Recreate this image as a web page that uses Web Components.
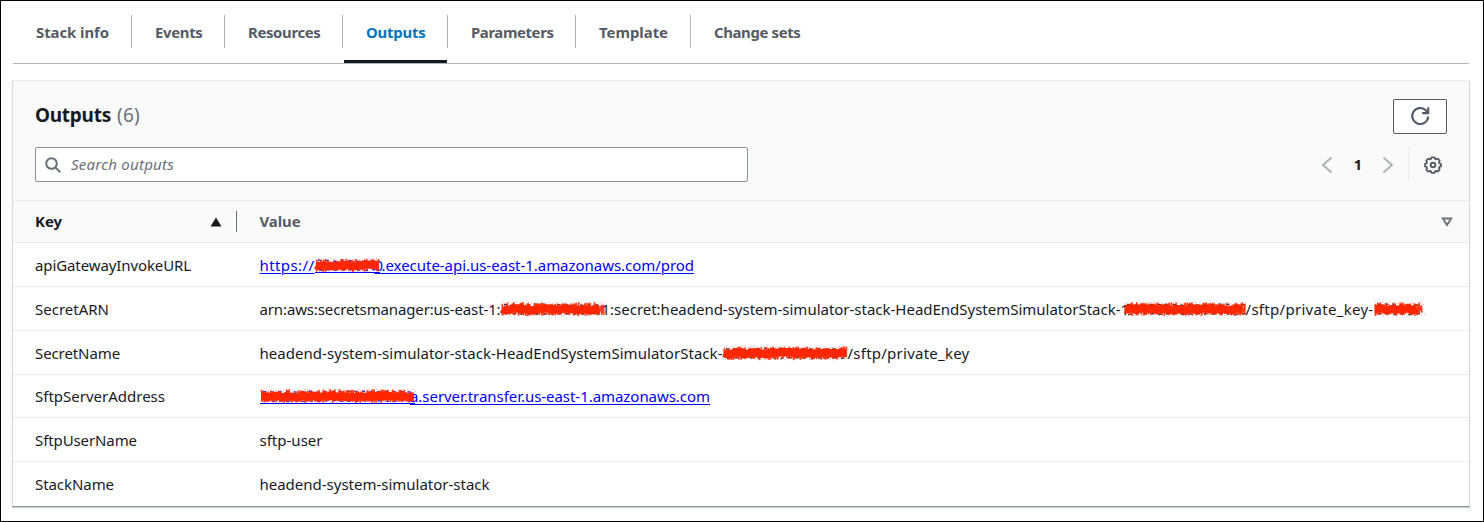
<!DOCTYPE html>
<html lang="en">
<head>
<meta charset="utf-8">
<title>Stack outputs</title>
<style>
html,body{margin:0;height:100%}
body{font:15px/22px "Noto Sans","Open Sans",sans-serif;color:#16191f;background:#fff;overflow:hidden}
</style>
</head>
<body>
<stack-page></stack-page>
<script>
const define = (name, html, setup) => {
  const t = document.createElement('template');
  t.innerHTML = html;
  customElements.define(name, class extends HTMLElement {
    connectedCallback() {
      if (this.shadowRoot) return;
      this.attachShadow({mode: 'open'}).append(t.content.cloneNode(true));
      if (setup) setup(this, this.shadowRoot);
    }
  });
};

// Text tracked to occupy the width given in its "w" attribute.
define('fit-text', `<style>:host{display:inline-block;white-space:pre;flex:none}span{display:inline-block;text-decoration:var(--line,none);text-decoration-thickness:1px;text-underline-offset:2px}</style><span><slot></slot></span>`, (el, root) => {
  const s = root.querySelector('span');
  const w = +el.getAttribute('w');
  const n = el.textContent.length;
  s.style.letterSpacing = (w - s.getBoundingClientRect().width) / n + 'px';
  el.style.width = w + 'px';
});

// Red marker scribble laid over a confidential part of a value.
define('marker-redaction', `<style>:host{display:block;flex:none;height:16px;position:relative;z-index:1}svg{display:block;overflow:visible}</style><svg height="16"></svg>`, (el, root) => {
  const w = +el.getAttribute('w'), link = el.hasAttribute('link');
  let seed = w * 7919 + 13;
  const r = () => (seed = (seed * 16807) % 2147483647) / 2147483647;
  const f = v => v.toFixed(1);
  let out = '';
  if (link) out += `<path d="M0 15.500H${w}" stroke="#00f"/>`;
  let marks = '';
  for (let x = 3; x < w - 4; x += 7.6) marks += `M${f(x)} ${f(3 + r())}l3.500 .5M${f(x + 1)} ${f(12.8 + r())}l3.500 -.6`;
  out += `<path d="${marks}" stroke="${link ? '#4030c0' : '#40303a'}" stroke-width="1.5" fill="none"/>`;
  let d = `M1 4`;
  for (let x = 1; x < w - 1; x += 2.3) d += `L${f(x + r())} ${f(1.2 + r() * 4)}L${f(x + 1 - r())} ${f(11.4 + r() * 3.6)}`;
  out += `<path d="${d}" fill="none" stroke="#ff2600" stroke-opacity=".9" stroke-width="1.600"/>`;
  let core = `M1 8`;
  for (let x = 3; x < w - 1; x += 5) core += `L${f(x)} ${f(7 + r() * 2.6)}`;
  out += `<path d="${core}" fill="none" stroke="#ff2600" stroke-width="8"/>`;
  let dots = '';
  for (let x = 1; x < w; x += 2.4) dots += `M${f(x)} ${f(1 + r() * 2.400)}h1M${f(x + r())} ${f(12.8 + r() * 2)}h1`;
  out += `<path d="${dots}" stroke="#ff6a50" stroke-opacity=".7" stroke-width="1"/>`;
  const svg = root.querySelector('svg');
  svg.setAttribute('width', w);
  svg.innerHTML = out;
  el.style.width = w + 'px';
});

define('tab-item', `<style>
:host{display:flex;box-sizing:border-box;height:48px;padding:6px 0 0 23px;position:relative;font-weight:700;color:#545b64;line-height:22px;font-size:14.900px}
:host([first]){padding-left:22px}
:host([active]){color:#0073bb}
:host(:not([last]))::after{content:"";position:absolute;right:0;top:0;width:1px;height:33px;background:#aab7b8}
:host([active])::before{content:"";position:absolute;left:1px;right:1px;bottom:0;height:3px;background:#16191f}
</style><slot></slot>`, el => { el.style.width = el.getAttribute('w') + 'px'; });

define('tab-bar', `<style>
:host{display:flex;height:48px;border-bottom:1px solid #aab7b8;box-sizing:content-box;padding-left:1px;margin-right:1px}
</style>
<tab-item w="118" first><fit-text w="73">Stack info</fit-text></tab-item>
<tab-item w="93"><fit-text w="47.500">Events</fit-text></tab-item>
<tab-item w="118"><fit-text w="72.500">Resources</fit-text></tab-item>
<tab-item w="105" active><fit-text w="59.500">Outputs</fit-text></tab-item>
<tab-item w="128"><fit-text w="82.500">Parameters</fit-text></tab-item>
<tab-item w="115"><fit-text w="69">Template</fit-text></tab-item>
<tab-item w="120" last><fit-text w="86.500">Change sets</fit-text></tab-item>`);

define('refresh-button', `<style>
:host{display:block;width:54px;height:35px}
button{display:grid;place-items:center;width:54px;height:35px;border:1px solid #545b64;border-radius:2px;background:#fff;padding:0 0 1px;box-sizing:border-box}
</style><button aria-label="Refresh"><svg width="20" height="20" viewBox="0 0 20 20" fill="none" stroke="#545b64" stroke-width="2.100"><path d="M18.2 10.500a8 8 0 1 1-2.500-6.300L18 6.400"/><path d="M18.200 1.300v5.800h-6"/></svg></button>`);

define('search-field', `<style>
:host{display:flex;align-items:center;box-sizing:border-box;width:713px;height:35px;border:1px solid #879596;border-radius:2px;background:#fff;padding-left:9px;color:#687078;font-style:italic}
svg{margin-right:10px}
fit-text{margin-top:-2px}
</style><svg width="16" height="16" viewBox="0 0 16 16" fill="none" stroke="#687078" stroke-width="2"><circle cx="6.500" cy="6.500" r="5.300"/><path d="M10.400 10.400 15.200 15.200"/></svg><fit-text w="103">Search outputs</fit-text>`);

define('page-controls', `<style>
:host{display:flex;align-items:center;height:35px}
.num{width:13px;text-align:center;font-weight:700;font-size:14.500px;margin:-1px 17.500px 0 18.500px}
.sep{width:1px;height:35px;background:#eaeded;margin:0 15px 0 14px}
</style>
<svg width="12" height="18" viewBox="0 0 12 18" fill="none" stroke="#aab7b8" stroke-width="2"><path d="M10.500 1.500 2 9l8.500 7.500"/></svg>
<span class="num">1</span>
<svg width="12" height="18" viewBox="0 0 12 18" fill="none" stroke="#aab7b8" stroke-width="2"><path d="M1.500 1.500 10 9l-8.500 7.500"/></svg>
<span class="sep"></span>
<svg width="18" height="18" viewBox="0 0 18 18" fill="none" stroke="#545b64"><path stroke-width="1.800" stroke-linejoin="round" d="M7.500 1.300h3l.5 1.500 1.200.5 1.500-.7 2 2-.7 1.500.5 1.200 1.500.5v2.600l-1.500.5-.5 1.200.7 1.500-2 2-1.500-.7-1.200.5-.5 1.500h-3L7 15.400l-1.200-.5-1.500.7-2-2 .7-1.500-.5-1.200L1 10.400V7.800l1.500-.5L3 6.100l-.7-1.500 2-2 1.500.7L7 2.800z"/><circle cx="9" cy="9" r="2.300" stroke-width="1.900"/></svg>`);

define('table-row', `<style>
:host{display:grid;grid-template-columns:224.500px 1fr;align-items:center;box-sizing:border-box;padding-left:22px;border-bottom:1px solid #eaeded;height:44px;background:#fff}
:host([short]){height:43px}
:host([final]){border-bottom:0}
.v{display:flex;align-items:center;height:22px}
</style><slot name="key"></slot><div class="v"><slot></slot></div>`);

define('value-link', `<style>:host{display:block;color:#00f;--line:underline}a{color:inherit;display:flex;align-items:center;text-decoration:none}</style><a href="#"><slot></slot></a>`);

define('outputs-panel', `<style>
:host{display:block;box-sizing:border-box;height:427px;border:1px solid #d5dbdb;border-top-color:#eaeded;border-bottom-color:#879596;box-shadow:0 1px 1px rgba(0,28,36,.2);background:#fff}
header{box-sizing:border-box;height:120px;padding:18px 22px 0;background:#fafafa;border-bottom:1px solid #eaeded}
.line{display:flex;justify-content:space-between}
.line+.line{margin-top:13px}
h2{display:flex;gap:6px;margin:0;font-size:19px;line-height:33px;font-weight:700}
.count{font-weight:400;color:#687078}
page-controls{margin-right:5px}
.cols{display:grid;grid-template-columns:224.500px 1fr;box-sizing:border-box;height:42px;padding-left:22px;background:#fafafa;border-bottom:1px solid #eaeded;font-weight:700;font-size:14.900px}
.cols div{display:flex;align-items:center;justify-content:space-between}
.cols fit-text{margin-top:-2px}
.cols .k{position:relative;padding-right:38px}
.k::after{content:"";position:absolute;right:22.500px;top:10px;width:1px;height:21px;background:#687078}
.cols .val{color:#545b64;padding-right:16px}
</style>
<header>
<div class="line"><h2><fit-text w="76">Outputs</fit-text><fit-text class="count" w="23">(6)</fit-text></h2><refresh-button></refresh-button></div>
<div class="line"><search-field></search-field><page-controls></page-controls></div>
</header>
<div class="cols"><div class="k"><fit-text w="27">Key</fit-text><svg width="12" height="10"><path d="M6 .5 11.500 9.500H.5z" fill="#16191f"/></svg></div>
<div class="val"><fit-text w="41">Value</fit-text><svg width="12" height="10"><path d="M1.800 1.500h8.400L6 8z" fill="none" stroke="#687078" stroke-width="1.800"/></svg></div></div>
<table-row><fit-text slot="key" w="156">apiGatewayInvokeURL</fit-text><value-link><fit-text w="55">https://</fit-text><marker-redaction link w="65"></marker-redaction><fit-text w="8" style="margin-left:-5px">0</fit-text><fit-text w="312.500" style="margin-left:-1px">.execute-api.us-east-1.amazonaws.com/prod</fit-text></value-link></table-row>
<table-row><fit-text slot="key" w="74">SecretARN</fit-text><fit-text w="241">arn:aws:secretsmanager:us-east-1:</fit-text><marker-redaction w="104"></marker-redaction><fit-text w="519" style="margin-left:-3px">1:secret:headend-system-simulator-stack-HeadEndSystemSimulatorStack-</fit-text><fit-text w="6">1</fit-text><marker-redaction w="122" style="margin-left:-3px"></marker-redaction><fit-text w="128">/sftp/private_key-</fit-text><marker-redaction w="49"></marker-redaction></table-row>
<table-row><fit-text slot="key" w="85">SecretName</fit-text><fit-text w="463">headend-system-simulator-stack-HeadEndSystemSimulatorStack-</fit-text><marker-redaction w="125"></marker-redaction><fit-text w="122">/sftp/private_key</fit-text></table-row>
<table-row short><fit-text slot="key" w="130">SftpServerAddress</fit-text><value-link><marker-redaction link w="155"></marker-redaction><fit-text w="300" style="margin-left:-4.500px">a.server.transfer.us-east-1.amazonaws.com</fit-text></value-link></table-row>
<table-row><fit-text slot="key" w="102">SftpUserName</fit-text><fit-text w="63">sftp-user</fit-text></table-row>
<table-row final><fit-text slot="key" w="79">StackName</fit-text><fit-text w="230">headend-system-simulator-stack</fit-text></table-row>`);

define('stack-page', `<style>
:host{display:block;box-sizing:border-box;width:1484px;height:522px;border:1px solid #000;padding:14px 13px 0 11px;background:#fff}
tab-bar{margin-left:1px;margin-right:1px}
outputs-panel{margin-top:16px}
</style><tab-bar></tab-bar><outputs-panel></outputs-panel>`);
</script>
</body>
</html>
